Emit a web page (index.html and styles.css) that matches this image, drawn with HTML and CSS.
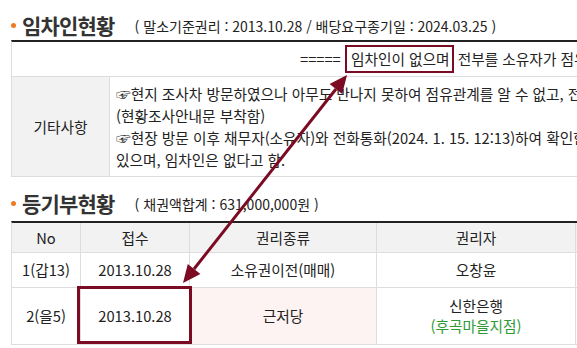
FILE: index.html
```html
<!DOCTYPE html>
<html lang="ko">
<head>
<meta charset="utf-8">
<link rel="stylesheet" href="styles.css">
</head>
<body>
<div class="page">
  <div class="sec-head first">
    <span class="dot"></span>
    <h2 class="sec-title">임차인현황</h2>
    <span class="sec-sub">( 말소기준권리 : 2013.10.28 / 배당요구종기일 : 2024.03.25 )</span>
  </div>
  <table class="tbl tenant">
    <tr class="notice-row">
      <td colspan="2" class="notice">===== <span class="mark">임차인이 없으며</span> 전부를 소유자가 점유하는 것으로 추정됨 =====</td>
    </tr>
    <tr class="etc-row">
      <td class="label">기타사항</td>
      <td class="etc">☞현지 조사차 방문하였으나 아무도 만나지 못하여 점유관계를 알 수 없고, 전입세대열람 결과 소유자 세대만 등재되어 있음<br>(현황조사안내문 부착함)<br>☞현장 방문 이후 채무자(소유자)와 전화통화(2024. 1. 15. 12:13)하여 확인한 바, 본건은 소유자가 점유하고<br>있으며, 임차인은 없다고 함.</td>
    </tr>
  </table>

  <div class="sec-head second">
    <span class="dot"></span>
    <h2 class="sec-title">등기부현황</h2>
    <span class="sec-sub">( 채권액합계 : 631,000,000원 )</span>
  </div>
  <table class="tbl reg">
    <tr class="head">
      <th class="c-no">No</th>
      <th class="c-date">접수</th>
      <th class="c-kind">권리종류</th>
      <th class="c-who">권리자</th>
      <th class="c-amt">채권금액</th>
    </tr>
    <tr class="r1">
      <td>1(갑13)</td>
      <td>2013.10.28</td>
      <td>소유권이전(매매)</td>
      <td>오창윤</td>
      <td></td>
    </tr>
    <tr class="r2">
      <td>2(을5)</td>
      <td class="boxed">2013.10.28</td>
      <td class="pink">근저당</td>
      <td>신한은행<br><span class="branch">(후곡마을지점)</span></td>
      <td></td>
    </tr>
  </table>
</div>
<svg class="arrow" width="577" height="348" viewBox="0 0 577 348">
  <line x1="336" y1="89" x2="194" y2="269" stroke="#7b0b22" stroke-width="3"/>
  <polygon points="347,75 342.2,94.1 329.6,84.1" fill="#7b0b22"/>
  <polygon points="183,283 200.4,273.9 187.8,263.9" fill="#7b0b22"/>
</svg>
</body>
</html>
```

FILE: styles.css
```css
html, body {
  margin: 0;
  padding: 0;
  background: #fff;
  overflow: hidden;
  width: 577px;
  height: 348px;
}
body {
  position: relative;
  font-family: "Noto Sans CJK KR", "Noto Sans", sans-serif;
  color: #222;
}
.page {
  padding-left: 11px;
  width: 900px;
}
.sec-head {
  display: flex;
  align-items: center;
  box-sizing: border-box;
}
.sec-head.first {
  height: 40px;
  padding-top: 10px;
}
.sec-head.second {
  height: 44px;
  padding-top: 8px;
}
.dot {
  width: 5px;
  height: 5px;
  border-radius: 50%;
  background: #f07a22;
  margin-right: 6px;
  margin-top: 1px;
}
.sec-title {
  margin: 0;
  font-size: 21px;
  font-weight: bold;
  letter-spacing: -0.8px;
  color: #333;
  line-height: 28px;
}
.sec-sub {
  margin-left: 20px;
  font-size: 14px;
  line-height: 20px;
  color: #222;
  margin-top: 2px;
}
.tbl {
  border-collapse: separate;
  border-spacing: 0;
  border-top: 2px solid #222;
  border-left: 1px solid #ddd;
  width: 900px;
  font-size: 14.7px;
}
.tbl td, .tbl th {
  padding: 0;
  border-right: 1px solid #ddd;
  border-bottom: 1px solid #ddd;
  vertical-align: middle;
}
.notice {
  height: 34px;
  padding-left: 288px !important;
  white-space: nowrap;
  line-height: 20px;
}
.mark {
  display: inline-block;
  border: 2.5px solid #7b0b22;
  padding: 2px 2px 2px 4px;
  line-height: 20px;
}
.label {
  width: 97px;
  background: #f2f2f2;
  text-align: center;
}
.etc {
  padding: 5px 0 5px 6px !important;
  line-height: 22px;
  white-space: nowrap;
  height: 89px;
}
.reg th {
  background: #f2f2f2;
  font-weight: normal;
  height: 29px;
  line-height: 20px;
}
.reg td {
  text-align: center;
  line-height: 20px;
}
.c-no { width: 68px; }
.c-date { width: 108px; }
.c-kind { width: 186px; }
.c-who { width: 198px; }
.reg .r1 td { height: 34px; }
.reg .r2 td { height: 56px; }
.pink { background: #fdf3f3; }
.branch { color: #2f9a36; }
.boxed { position: relative; }
.boxed::after {
  content: "";
  position: absolute;
  left: -4px;
  right: -3px;
  top: -2px;
  bottom: 0;
  border: 3px solid #7b0b22;
}
.arrow {
  position: absolute;
  left: 0;
  top: 0;
  pointer-events: none;
}
```
